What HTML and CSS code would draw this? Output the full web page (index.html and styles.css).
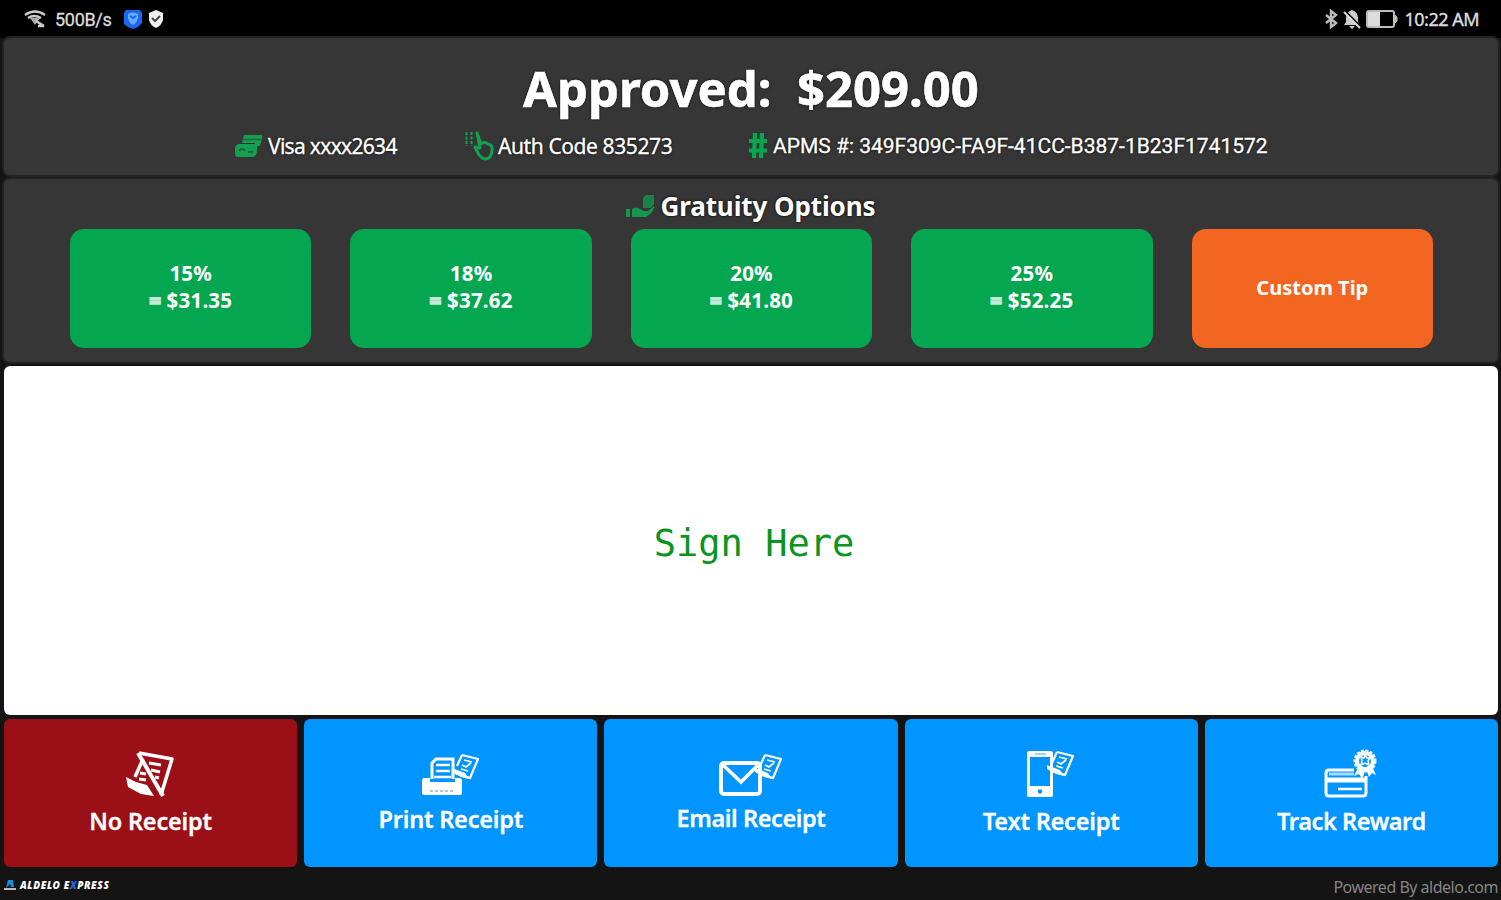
FILE: index.html
```html
<!DOCTYPE html>
<html lang="en">
<head>
    <meta charset="UTF-8">
    <meta name="viewport" content="width=device-width, initial-scale=1.0">
    <title>Payment Approved</title>
    <link rel="stylesheet" href="styles.css">
</head>
<body>

    <!-- Small receipt in a hand, used by several buttons -->
    <svg class="defs" width="0" height="0">
        <symbol id="slip" viewBox="0 0 28 28">
            <path d="M10 2 L26 6 L18 25 L3 20 M10 2 L5 13" fill="none" stroke="currentColor" stroke-width="2.2" stroke-linejoin="round"/>
            <path d="M12 7 L20 9 M10 12 L14 14 L19 10 M9 16 L16 18" fill="none" stroke="currentColor" stroke-width="1.8"/>
            <path d="M0 15 L5 17 L13 20 L17 26 L9 24 L0 19z" fill="currentColor"/>
        </symbol>
    </svg>

    <header class="status-bar">
        <div class="status-group">
            <svg class="wifi" width="22" height="18" viewBox="0 0 22 18">
                <path d="M1 5 Q11 -2 21 5 M4 8 Q10 4 17 8" fill="none" stroke="#ccc" stroke-width="2.4"/>
                <path d="M6 8 L16 8 L11 15z" fill="#aaa"/>
                <path d="M12 11 L20 16 M14 16 L20 16" stroke="#ccc" stroke-width="2.6"/>
            </svg>
            <span class="speed">500B/s</span>
            <svg class="app-badge" width="20" height="20" viewBox="0 0 20 20">
                <path d="M3 1 H17 L19 4 V14 L15 18 L10 20 L5 18 L1 15 V4z" fill="#1769ee"/>
                <path d="M5 5 Q10 2 15 5 V9 Q14 14 10 16 Q6 14 5 9z" fill="#6aa8ff"/>
                <path d="M7 7 L10 9 L13 7" fill="none" stroke="#1769ee" stroke-width="2"/>
            </svg>
            <svg class="shield" width="16" height="18" viewBox="0 0 16 18">
                <path d="M8 0 L15 3 V10 Q14 15 8 18 Q2 15 1 10 V3z" fill="#eee"/>
                <path d="M4 8 L7 11 L12 6" fill="none" stroke="#444" stroke-width="2"/>
            </svg>
        </div>
        <div class="status-group">
            <svg width="14" height="20" viewBox="0 0 14 20">
                <path d="M2 6 L12 14 L7 18 V2 L12 6 L2 14" fill="none" stroke="#bbb" stroke-width="2.4"/>
            </svg>
            <svg class="bell" width="18" height="19" viewBox="0 0 18 19">
                <path d="M9 0 Q15 2 15 8 V12 L17 15 H1 L3 12 V8 Q3 2 9 0z M6 16 H12 L9 19z" fill="#ccc"/>
                <path d="M3 2 L18 17" stroke="#000" stroke-width="2"/>
                <path d="M1 2 L17 18" stroke="#ddd" stroke-width="2"/>
            </svg>
            <svg class="battery" width="32" height="18" viewBox="0 0 32 18">
                <rect x="1" y="1" width="27" height="16" rx="2" fill="none" stroke="#bbb" stroke-width="2"/>
                <rect x="2" y="2" width="12" height="14" fill="#ddd"/>
                <path d="M29 5 L31 7 V11 L29 13z" fill="#bbb" stroke="#bbb"/>
            </svg>
            <span class="clock">10:22 AM</span>
        </div>
    </header>

    <main>
        <section class="panel approved">
            <h1>Approved:&nbsp; $209.00</h1>
            <div class="details">
                <div class="detail visa">
                    <svg width="28" height="24" viewBox="0 0 28 24">
                        <path d="M9 1 H26 Q28 1 27 4 L25 12 H20 V9 H7z" fill="#12a150"/>
                        <path d="M8 5.500 H26" stroke="#2a5f3f" stroke-width="1.500"/>
                        <path d="M4 10 H22 V18 Q21 23 17 23 H3 Q0 23 0 20 V14 Q1 10 4 10z" fill="#12a150"/>
                        <path d="M4 17 Q7 13 10 17 M13 18 H18" fill="none" stroke="#27633f" stroke-width="2"/>
                    </svg>
                    <span>Visa xxxx2634</span>
                </div>
                <div class="detail auth">
                    <svg width="28" height="30" viewBox="0 0 28 30">
                        <path d="M1.500 1 V15 M6.500 1 V15" stroke="#12a150" stroke-width="2" stroke-dasharray="3 1.5"/>
                        <path d="M12 2 L16 13 Q20 10 23 13 Q28 14 27 20 Q26 28 20 28 Q15 27 12 20 L10 16 L15 17z" fill="none" stroke="#12a150" stroke-width="3" stroke-linejoin="round"/>
                    </svg>
                    <span>Auth Code 835273</span>
                </div>
                <div class="detail apms">
                    <svg width="20" height="28" viewBox="0 0 20 28">
                        <path d="M7 1 L6 26 M14 1 L13 26 M1 9 H19 M1 18.500 H19" stroke="#04a650" stroke-width="4.200"/>
                    </svg>
                    <span>APMS #: 349F309C-FA9F-41CC-B387-1B23F1741572</span>
                </div>
            </div>
        </section>

        <section class="panel gratuity">
            <h2>
                <svg width="29" height="23" viewBox="0 0 29 23">
                    <path d="M0 14 H4 V22 H0z M6 14 Q10 11 14 14 L18 16 H22 L28 11 Q29 14 24 19 L20 22 H6z" fill="#16964c"/>
                    <path d="M17 3 L20 0 H28 V9 L25 13 H17z" fill="#168245"/>
                </svg>
                <span>Gratuity Options</span>
            </h2>
            <div class="tips">
                <button class="tip"><span>15%</span><span><i class="eq">=</i> $31.35</span></button>
                <button class="tip"><span>18%</span><span><i class="eq">=</i> $37.62</span></button>
                <button class="tip"><span>20%</span><span><i class="eq">=</i> $41.80</span></button>
                <button class="tip"><span>25%</span><span><i class="eq">=</i> $52.25</span></button>
                <button class="tip custom"><span>Custom Tip</span></button>
            </div>
        </section>

        <section class="signature">Sign Here</section>

        <section class="actions">
            <button class="action none">
                <svg width="50" height="50" viewBox="0 0 50 50">
                    <path d="M13 3 L46 9 L35 45 M17 9 L9 27" fill="none" stroke="currentColor" stroke-width="3.5" stroke-linejoin="round"/>
                    <path d="M23 13 L35 15 M25 20 L34 22 M14 23 L20 24 M29 27 L33 28 M13 29 L20 30" stroke="currentColor" stroke-width="3"/>
                    <path d="M0 27 L10 32 L21 35 L28 46 L15 44 L2 37z" fill="currentColor"/>
                    <path d="M12 3 L37 46" stroke="currentColor" stroke-width="4"/>
                </svg>
                <span>No Receipt</span>
            </button>
            <button class="action print">
                <svg width="60" height="46" viewBox="0 0 60 46">
                    <path d="M11 26 V10 L15 6 H32 V26" fill="none" stroke="currentColor" stroke-width="3"/>
                    <path d="M15 12 H29 M15 18 H29 M13 24 H30" stroke="currentColor" stroke-width="2.6"/>
                    <path d="M3 25 H9 V29 H34 V25 H38 Q41 25 41 28 V40 Q41 42 39 42 H3 Q1 42 1 40 V28 Q1 25 3 25z" fill="currentColor"/>
                    <path d="M9 38 H32" stroke="#8bbcdd" stroke-width="1.5" stroke-dasharray="3 2"/>
                    <use href="#slip" x="31" y="0" width="28" height="28"/>
                </svg>
                <span>Print Receipt</span>
            </button>
            <button class="action email">
                <svg width="64" height="44" viewBox="0 0 64 44">
                    <rect x="2" y="9" width="39" height="31" rx="3" fill="none" stroke="currentColor" stroke-width="4"/>
                    <path d="M4 11 L22 28 L39 11" fill="none" stroke="currentColor" stroke-width="3.5"/>
                    <use href="#slip" x="36" y="-1" width="28" height="28"/>
                </svg>
                <span>Email Receipt</span>
            </button>
            <button class="action text">
                <svg width="50" height="50" viewBox="0 0 50 50">
                    <path fill-rule="evenodd" d="M3 1 H25 Q27 1 27 4 V45 Q27 47 25 47 H3 Q1 47 1 45 V4 Q1 1 3 1z M4 7 V36 H24 V7z" fill="currentColor"/>
                    <path d="M9 4 H20" stroke="#7cc7ff" stroke-width="1.5"/>
                    <circle cx="14" cy="41.500" r="2.200" fill="#0095ff"/>
                    <use href="#slip" x="21" y="0" width="28" height="28"/>
                </svg>
                <span>Text Receipt</span>
            </button>
            <button class="action track">
                <svg width="54" height="50" viewBox="0 0 54 50">
                    <path d="M30 20 H5 Q2 20 2 23 V43 Q2 46 5 46 H39 Q42 46 42 43 V26" fill="none" stroke="currentColor" stroke-width="3"/>
                    <path d="M3 30 H41" stroke="currentColor" stroke-width="5"/>
                    <path d="M5 24 H30" stroke="#a8dcff" stroke-width="3"/>
                    <path d="M14 39 H38" stroke="currentColor" stroke-width="2.5"/>
                    <path d="M34 18 L30 26 L35 24 L38 29 L42 19 L45 27 L48 23 L52 25 L48 16z" fill="currentColor"/>
                    <circle cx="41" cy="11" r="8" fill="#0095ff" stroke="currentColor" stroke-width="4"/>
                    <circle cx="41" cy="11" r="10.500" fill="none" stroke="currentColor" stroke-width="2" stroke-dasharray="3 1.5"/>
                    <path d="M37 7 L40 8 L41 5 L43 8 L46 8 L44 11 L45 15 L41 13 L37 15 L38 11z" fill="#0095ff" stroke="currentColor" stroke-width="1.500"/>
                </svg>
                <span>Track Reward</span>
            </button>
        </section>
    </main>

    <footer>
        <div class="brand">
            <svg width="13" height="12" viewBox="0 0 13 12">
                <path d="M4 1 H9 L10 8 H7 L6 5 L2 9z" fill="#168edb"/>
                <path d="M0 10 H12" stroke="#bbb" stroke-width="2"/>
            </svg>
            <span>ALDELO E<b>X</b>PRESS</span>
        </div>
        <div class="powered">Powered By aldelo.com</div>
    </footer>

</body>
</html>
```
FILE: styles.css
```css
* {
    box-sizing: border-box;
}

body {
    margin: 0;
    width: 1501px;
    height: 900px;
    overflow: hidden;
    display: flex;
    flex-direction: column;
    background-color: #141414;
    color: white;
    font-family: 'Noto Sans', 'Open Sans', sans-serif;
}

svg {
    display: block;
    flex: none;
    overflow: visible;
}

.defs {
    position: absolute;
}

h1, h2 {
    margin: 0;
}

button {
    border: none;
    padding: 0;
    color: white;
    font-family: inherit;
    cursor: pointer;
}

span {
    white-space: nowrap;
}

.status-bar {
    height: 38px;
    flex: none;
    background-color: black;
    display: flex;
    justify-content: space-between;
    align-items: center;
    padding: 0 22px 0 24px;
    color: #ddd;
}

.status-group {
    display: flex;
    align-items: center;
}

.speed {
    font-family: Roboto, sans-serif;
    font-size: 18px;
    letter-spacing: -0.3px;
    margin-left: 9px;
    -webkit-text-stroke: 0.3px #ddd;
}

.app-badge {
    margin-left: 12px;
}

.shield {
    margin-left: 5px;
}

.bell {
    margin-left: 5px;
}

.battery {
    margin-left: 5px;
}

.clock {
    font-size: 18px;
    letter-spacing: -0.5px;
    margin-left: 6px;
    -webkit-text-stroke: 0.4px #ddd;
}

main {
    flex: 1;
    display: flex;
    flex-direction: column;
    padding: 0 3px 0 4px;
    gap: 4px;
}

.panel {
    background-color: #363636;
    border-radius: 6px;
    box-shadow: 0 0 0 2px #222;
}

.approved {
    height: 137px;
    padding-top: 20px;
}

.approved h1 {
    font-size: 49px;
    line-height: 60px;
    text-align: center;
    letter-spacing: 0;
    -webkit-text-stroke: 0.6px white;
    text-shadow: 0 0 3px black;
}

.details {
    display: flex;
    align-items: center;
    height: 30px;
    margin-top: 13px;
    padding-left: 231px;
}

.detail {
    display: flex;
    align-items: center;
    font-size: 21px;
    gap: 5px;
    text-shadow: 0 0 3px black;
    -webkit-text-stroke: 0.3px white;
}

.visa {
    width: 230px;
}

.auth {
    width: 283px;
}

.visa span {
    letter-spacing: -0.7px;
}

.auth span {
    letter-spacing: -0.4px;
}

.apms span {
    font-family: Roboto, sans-serif;
}

.gratuity {
    height: 183px;
    padding-top: 9px;
}

.gratuity h2 {
    display: flex;
    justify-content: center;
    align-items: center;
    gap: 5px;
    height: 36px;
    font-size: 26px;
    font-weight: 700;
    letter-spacing: -0.1px;
    text-shadow: 0 0 3px black;
}

.tips {
    display: grid;
    grid-template-columns: repeat(5, 1fr);
    gap: 39px;
    padding: 0 65px 0 66px;
    margin-top: 5px;
}

.tip {
    height: 119px;
    border-radius: 14px;
    background-color: #04a650;
    display: flex;
    flex-direction: column;
    align-items: center;
    justify-content: center;
    padding-bottom: 3px;
    font-size: 20.5px;
    line-height: 27px;
    font-weight: 700;
    letter-spacing: 0.2px;
}

.eq {
    font-style: normal;
    opacity: 0.75;
    -webkit-text-stroke: 1.5px white;
}

.custom {
    background-color: #f36621;
    font-size: 20px;
    letter-spacing: 0;
}

.signature {
    height: 349px;
    display: flex;
    align-items: center;
    justify-content: center;
    padding: 5px 0 0 6px;
    border-radius: 6px;
    background-color: white;
    color: #0b9422;
    font-family: 'DejaVu Sans Mono', monospace;
    font-size: 37px;
}

.actions {
    display: grid;
    grid-template-columns: repeat(5, 1fr);
    gap: 7px;
    height: 148px;
}

.action {
    display: flex;
    flex-direction: column;
    align-items: center;
    padding-top: 31px;
    border-radius: 6px;
    background-color: #0095ff;
    font-size: 23.5px;
    line-height: 32px;
    font-weight: 600;
    letter-spacing: -0.2px;
    -webkit-text-stroke: 0.3px white;
}

.action span {
    margin-top: 5px;
}

.none {
    background-color: #9b0f17;
}

.print {
    padding-top: 34px;
}

.email {
    padding-top: 35px;
    letter-spacing: -0.4px;
}

.print span {
    margin-top: 4px;
}

.email span {
    margin-top: 4px;
}

.track {
    letter-spacing: -0.4px;
}

footer {
    height: 33px;
    flex: none;
    display: flex;
    justify-content: space-between;
    align-items: center;
    padding: 3px 3px 0 4px;
}

.brand {
    display: flex;
    align-items: center;
    gap: 3px;
    font-size: 10px;
    font-style: italic;
    font-weight: 900;
    letter-spacing: 0.6px;
}

.brand b {
    color: #2465e8;
}

.powered {
    color: #858585;
    font-size: 16px;
    letter-spacing: -0.5px;
    padding-top: 4px;
}
```
